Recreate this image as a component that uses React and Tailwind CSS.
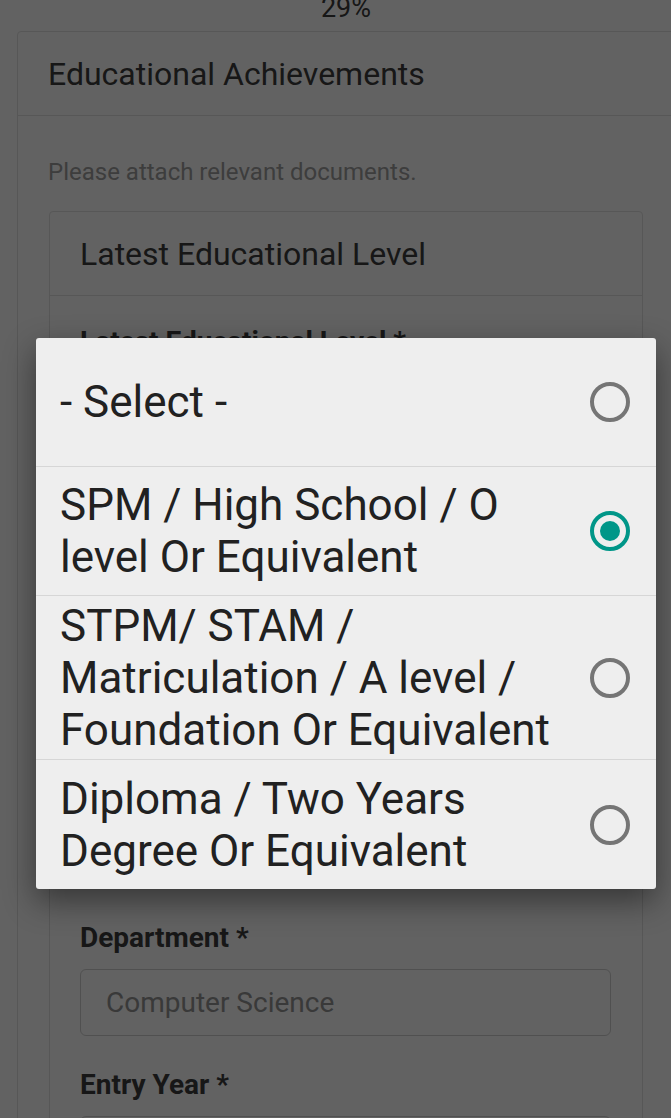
import { useState } from 'react'

const options = [
  '- Select -',
  'SPM / High School / O level Or Equivalent',
  'STPM/ STAM / Matriculation / A level / Foundation Or Equivalent',
  'Diploma / Two Years Degree Or Equivalent',
]

function Field({ label, value, tall }) {
  return (
    <div className="mb-[32px]">
      <div className="text-[28px] leading-[33px] font-bold text-[#3a3a3a]">{label}</div>
      <div
        className={`mt-[15px] flex items-center rounded-[6px] border border-[#c8c8c8] pl-[25px] text-[28px] text-[#8f8f8f] ${tall ? 'h-[75px]' : 'h-[67px]'}`}
      >
        {value}
      </div>
    </div>
  )
}

function Radio({ checked }) {
  if (checked) {
    return (
      <span className="flex h-[40px] w-[40px] shrink-0 items-center justify-center rounded-full border-[4px] border-[#009688]">
        <span className="h-[20px] w-[20px] rounded-full bg-[#009688]" />
      </span>
    )
  }
  return <span className="h-[40px] w-[40px] shrink-0 rounded-full border-[4px] border-[#757575]" />
}

export default function App() {
  const [selected, setSelected] = useState(1)

  return (
    <div
      className="relative h-[1118px] overflow-hidden bg-[#f5f5f5] text-[#3a3a3a]"
      style={{ fontFamily: 'Roboto, "Noto Sans", sans-serif' }}
    >
      <div className="ml-[17px] w-[658px]">
        <div className="-mt-[8px] text-center text-[27px] leading-[32px]">29%</div>

        <div className="mt-[7px] rounded-[4px] border border-[#dadada]">
          <div className="flex h-[84px] items-center border-b border-[#dadada] pl-[30px] text-[32px]">
            Educational Achievements
          </div>

          <div className="pl-[31px] pr-[31px] pt-[42px]">
            <p className="-ml-px text-[24px] leading-[28px] text-[#999]">Please attach relevant documents.</p>

            <div className="mt-[25px] rounded-[4px] border border-[#dadada]">
              <div className="flex h-[84px] items-center border-b border-[#dadada] pl-[30px] text-[32px]">
                Latest Educational Level
              </div>
              <div className="pl-[30px] pr-[31px] pt-[29px]">
                <Field label="Latest Educational Level *" value={options[selected]} tall />
                <Field label="Institution Name *" value="Universiti Malaya" />
                <Field label="Faculty *" value="Computer Science and IT" />
                <Field label="Programme *" value="Bachelor of Computer Science" />
                <Field label="Department *" value="Computer Science" />
                <Field label="Entry Year *" value="2016" />
              </div>
            </div>
          </div>
        </div>
      </div>

      <div className="absolute inset-0 bg-black/60" />

      <div className="absolute left-[36px] top-[338px] w-[620px] overflow-hidden rounded-[3px] bg-[#eeeeee] shadow-[0_12px_32px_rgba(0,0,0,0.45)]">
        {options.map((opt, i) => (
          <button
            key={opt}
            onClick={() => setSelected(i)}
            className={`flex min-h-[129px] w-full items-center py-[3.5px] pl-[24px] pr-[26px] text-left ${
              i < options.length - 1 ? 'border-b border-[#d6d6d6]' : ''
            }`}
          >
            <span className="flex-1 pr-[25px] text-[44px] leading-[52px] text-[#212121]">{opt}</span>
            <Radio checked={selected === i} />
          </button>
        ))}
      </div>
    </div>
  )
}
